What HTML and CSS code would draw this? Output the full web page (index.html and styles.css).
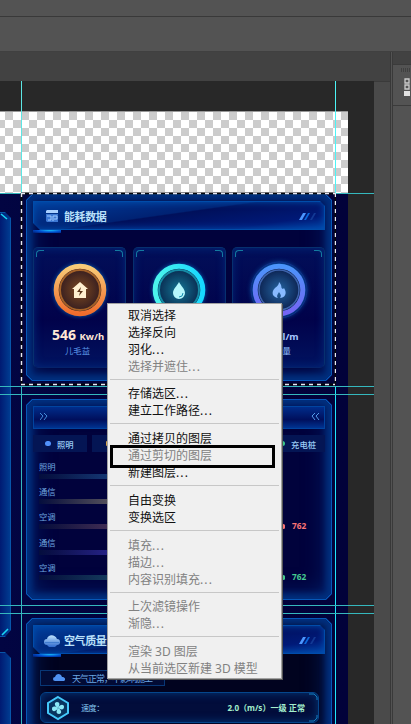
FILE: index.html
```html
<!DOCTYPE html>
<html lang="zh-CN">
<head>
<meta charset="utf-8">
<title>画布</title>
<link rel="stylesheet" href="styles.css">
</head>
<body>
<div class="app">
  <div class="menubar"></div>
  <div class="optionbar"></div>
  <div class="workspace">
    <div class="document">
      <div class="tabs"></div>
      <div class="stage">
        <div class="canvas">
          <div class="checker"></div>
          <div class="artwork">
            <div class="side">
              <div class="side-panel side-top"></div>
              <div class="side-panel side-bottom"></div>
              <svg class="side-ticks" width="12" height="531"><path d="M1 21l6 5M2 442l6-6" stroke="#18d4f4" stroke-width="1.6" fill="none"/></svg>
            </div>
            <div class="main">
              <section class="panel energy">
                <header class="title">
                  <svg class="title-icon" width="13" height="13" viewBox="0 0 13 13"><path d="M1 0h11v3H0V1z" fill="#a9d0ff"/><path d="M0 4h12v8H1l-1-1z" fill="#3c78d4"/><path d="M1 6h4v4H2M7 6v5M7 6h4v3H8" stroke="#9cc8ff" fill="none"/></svg>
                  <h2>能耗数据</h2>
                  <svg class="slashes" width="17" height="8" viewBox="0 0 17 8"><path d="M0 7L4 0h3L3 7z" fill="#4b96ff"/><path d="M5 7L9 0h2L7 7z" fill="#0b68dc"/><path d="M11 7l4-7h2l-4 7z" fill="#123995"/></svg>
                </header>
                <div class="glow"></div>
                <div class="cards">
                  <div class="card">
                    <svg class="ring" width="60" height="60" viewBox="0 0 60 60"><defs><linearGradient id="g1" x2="0" y2="1"><stop stop-color="#f8cc78"/><stop offset="1" stop-color="#f06c2c"/></linearGradient><radialGradient id="r1"><stop stop-color="#7d4a21"/><stop offset="1" stop-color="#2c1720"/></radialGradient></defs><circle cx="30" cy="30" r="23.8" fill="url(#r1)" stroke="url(#g1)" stroke-width="5"/><circle cx="30" cy="30" r="20" fill="none" stroke="#a56228" stroke-width="2"/><path d="M30 22l8 7h-2v9H24v-9h-2z" fill="#fff0d0"/><path d="M31 27l-4 5h3l-1 4 4-5h-3z" fill="#5a3519"/></svg>
                    <div class="value">546 <small>Kw/h</small></div>
                    <div class="label">儿毛益</div>
                  </div>
                  <div class="card">
                    <svg class="ring" width="60" height="60" viewBox="0 0 60 60"><defs><linearGradient id="g2"><stop stop-color="#4cf4ec"/><stop offset="1" stop-color="#16d8ff"/></linearGradient><radialGradient id="r2"><stop stop-color="#147795"/><stop offset="1" stop-color="#082047"/></radialGradient></defs><circle cx="30" cy="30" r="23.8" fill="url(#r2)" stroke="url(#g2)" stroke-width="5"/><circle cx="30" cy="30" r="20" fill="none" stroke="#158ba5" stroke-width="2"/><path d="M30 22c2 4 6 7 6 11a6 6 0 0 1-12 0c0-4 4-7 6-11z" fill="#b5f7fb"/><path d="M34 33q0 4-4 4" stroke="#168caf" fill="none"/></svg>
                  </div>
                  <div class="card">
                    <svg class="ring" width="60" height="60" viewBox="0 0 60 60"><defs><linearGradient id="g3" x2="0" y2="1"><stop stop-color="#4b94fa"/><stop offset="1" stop-color="#7564f4"/></linearGradient><radialGradient id="r3"><stop stop-color="#2464a0"/><stop offset="1" stop-color="#091a47"/></radialGradient></defs><circle cx="30" cy="30" r="28" fill="none" stroke="#10328a"/><circle cx="30" cy="30" r="23.8" fill="url(#r3)" stroke="url(#g3)" stroke-width="5"/><circle cx="30" cy="30" r="20" fill="none" stroke="#3e64ad" stroke-width="1.5"/><path d="M30 22c4 4 1 6 4 7l1-1c4 6 0 10-4 10 2-3 0-4-1-6-1 2-3 4-1 6-6-1-7-6-3-10 3-2 4-4 4-6z" fill="#88baff"/></svg>
                    <div class="value plain"><small>Jl/m</small></div>
                    <div class="label">用量</div>
                  </div>
                </div>
              </section>
              <section class="panel usage">
                <div class="strip"><svg width="9" height="7" viewBox="0 0 9 7"><path d="M0 0l3 3-3 4M4 0l3 3-3 4" stroke="#438bd8" fill="none"/></svg><svg width="9" height="7" viewBox="0 0 9 7"><path d="M4 0L1 3l3 4M8 0L5 3l3 4" stroke="#539be8" fill="none"/></svg></div>
                <div class="legend">
                  <span class="chip"><i class="dot blue"></i>照明</span>
                  <span class="chip"><i class="dot gold"></i></span>
                  <span class="chip last"><i class="dot green"></i>充电桩</span>
                </div>
                <div class="meter m1"><div class="meter-head"><span>照明</span></div><div class="bar"></div></div>
                <div class="meter m2"><div class="meter-head"><span>通信</span></div><div class="bar"></div></div>
                <div class="meter m3"><div class="meter-head"><span>空调</span></div><div class="bar"></div><b>762</b></div>
                <div class="meter m4"><div class="meter-head"><span>通信</span></div><div class="bar"></div></div>
                <div class="meter m5"><div class="meter-head"><span>空调</span></div><div class="bar"></div><b>762</b></div>
              </section>
              <section class="panel air">
                <header class="title">
                  <svg class="title-icon cloud" width="16" height="12" viewBox="0 0 16 12"><defs><linearGradient id="c" x2="0" y2="1"><stop stop-color="#bfe4ff"/><stop offset="1" stop-color="#2e68cc"/></linearGradient></defs><path d="M3 10a3 3 0 0 1 0-6C4-1 11-1 13 4a3 3 0 0 1 0 6l-2 2H5z" fill="url(#c)"/><path d="M1 7.500h14" stroke="#3070c8" stroke-width=".7"/></svg>
                  <h2>空气质量</h2>
                  <svg class="slashes" width="17" height="8" viewBox="0 0 17 8"><path d="M0 7L4 0h3L3 7z" fill="#4b96ff"/><path d="M5 7L9 0h2L7 7z" fill="#0b68dc"/><path d="M11 7l4-7h2l-4 7z" fill="#123995"/></svg>
                </header>
                <div class="glow"></div>
                <div class="notice"><svg width="12" height="8" viewBox="0 0 12 8"><path d="M2 7a2 2 0 0 1 0-4C3-1 8-1 9 3c4 0 4 4 1 4z" fill="#4f91f0"/></svg><span>天气正常，不影响施工</span></div>
                <div class="wind">
                  <svg width="26" height="26" viewBox="0 0 26 26"><path d="M13 2l10 6v10l-10 6-10-6V8z" fill="#08345f" stroke="#44c8fa" stroke-width="2"/><g fill="#8be9f7"><path id="b" d="M13 13C9 11 9 7 12 7s3 3 1 6z"/><use href="#b" transform="rotate(90 13 13)"/><use href="#b" transform="rotate(180 13 13)"/><use href="#b" transform="rotate(270 13 13)"/></g></svg>
                  <span class="speed">速度：</span><b>2.0（m/s）一级 正常</b>
                  <svg class="corner" width="9" height="29" viewBox="0 0 9 29"><path d="M0 1h5l3 3v3M0 28h5l3-3v-3" stroke="#147ebd" fill="none"/></svg>
                </div>
              </section>
            </div>
          </div>
        </div>
        <i class="guide v left-top"></i><i class="guide v left-low"></i>
        <i class="guide v right-top"></i><i class="guide v right-low"></i>
        <i class="guide h y1"></i><i class="guide h y2"></i><i class="guide h y3"></i><i class="guide h y4"></i><i class="guide h y5"></i>
        <svg class="selection" width="316" height="195"><path d="M1 2.500H315M1 193.500H315M1.500 2V194M315.500 2V194" stroke="#08080c" fill="none" stroke-width="2"/><path d="M1 2.500H315M1 193.500H315M1.500 2V194M315.500 2V194" stroke="#e8e8f4" fill="none" stroke-width="1.400" stroke-dasharray="4 4"/></svg>
      </div>
      <div class="scrollbar"></div>
    </div>
    <aside class="dock">
      <div class="dock-head"></div>
      <div class="dock-group"><i class="grip"></i><svg width="6" height="18" viewBox="0 0 6 18"><path d="M1 1h4v4H1zM1 7h4v4H1z" fill="#555" stroke="#ccc" stroke-width="1.300"/><path d="M0 13h6v5H0z" fill="#e2e2e2"/></svg></div>
    </aside>
  </div>
</div>

<div class="menu">
  <div class="item">取消选择</div>
  <div class="item">选择反向</div>
  <div class="item">羽化<span>...</span></div>
  <div class="item off">选择并遮住<span>...</span></div>
  <hr>
  <div class="item">存储选区<span>...</span></div>
  <div class="item">建立工作路径<span>...</span></div>
  <hr>
  <div class="item">通过拷贝的图层</div>
  <div class="item off">通过剪切的图层</div>
  <div class="item">新建图层<span>...</span></div>
  <hr>
  <div class="item">自由变换</div>
  <div class="item">变换选区</div>
  <hr>
  <div class="item off">填充<span>...</span></div>
  <div class="item off">描边<span>...</span></div>
  <div class="item off">内容识别填充<span>...</span></div>
  <hr>
  <div class="item off">上次滤镜操作</div>
  <div class="item off">渐隐<span>...</span></div>
  <hr>
  <div class="item off">渲染 3D 图层</div>
  <div class="item off">从当前选区新建 3D 模型</div>
  <i class="marker"></i>
</div>
</body>
</html>
```
FILE: styles.css
```css
* { box-sizing: border-box; }
body { margin: 0; overflow: hidden; font-family: "Noto Sans", "Noto Sans CJK SC", sans-serif; }
h2 { margin: 0; }
svg { display: block; flex: none; }

.app { width: 411px; height: 724px; display: flex; flex-direction: column; background: #535353; overflow: hidden; }
.menubar { height: 17px; flex: none; border-bottom: 1px solid #393939; }
.optionbar { height: 35px; flex: none; border-bottom: 1px solid #404040; }
.workspace { flex: 1; min-height: 0; display: flex; }

.document { width: 391px; display: grid; grid-template: 30px 1fr / 374px 16px; min-height: 0; border-right: 1px solid #383838; }
.tabs { grid-column: 1 / 3; background: #424242; border-bottom: 1px solid #3a3a3a; }
.stage { position: relative; background: #282828; overflow: hidden; margin-top: -1px; }
.scrollbar { background: #4a4a4a; }

.dock { flex: 1; margin-left: 1px; border-left: 1px solid #3a3a3a; }
.dock-head { height: 13px; background: #424242; border-bottom: 1px solid #3b3b3b; }
.dock-group { height: 41px; padding: 3px 0 0 11px; border-bottom: 1px solid #3b3b3b; }
.grip { display: block; width: 10px; height: 4px; margin: 0 0 6px -3px; background: repeating-linear-gradient(90deg, #404040 0 1px, #535353 1px 2px); }

/* Document */
.canvas { width: 348px; padding-top: 30px; }
.checker { height: 82px; background: repeating-conic-gradient(#ccc 0 25%, #fff 0 50%) -3px 0 / 16px 16px; border-top: 1px solid #999; }
.artwork { height: 531px; display: flex; background: linear-gradient(90deg, #020542 0, #01013b 50%, #02023a); overflow: hidden; }
.side { position: relative; width: 26px; flex: none; padding-top: 19px; }
.side-panel { width: 11px; background: linear-gradient(90deg, #001a72, #003c91); border: 1px solid #0755a9; border-left: 0; }
.side-top { height: 425px; clip-path: polygon(0 0, 5px 0, 100% 6px, 100% 418px, 5px 100%, 0 100%); }
.side-bottom { height: 90px; margin-top: 15px; clip-path: polygon(0 0, 5px 0, 100% 6px, 100% 100%, 0 100%); }
.side-ticks { position: absolute; left: 0; top: 0; }
.main { width: 306px; flex: none; display: flex; flex-direction: column; gap: 18px; padding-top: 1px; }

.panel { --cut: polygon(6px 0, calc(100% - 6px) 0, 100% 6px, 100% calc(100% - 6px), calc(100% - 6px) 100%, 6px 100%, 0 calc(100% - 6px), 0 6px); position: relative; isolation: isolate; flex: none; padding: 7px; background: #0657b8; clip-path: var(--cut); }
.panel::before { content: ""; position: absolute; inset: 1px; z-index: -1; clip-path: var(--cut); background: #01023c; box-shadow: inset 0 0 6px 5px #00307f, inset 0 0 24px 3px #002774; }
.energy { height: 187px; }
.usage { height: 201px; }
.air { height: 125px; }
.air::before { background: #01031f; }

.title { height: 29px; display: flex; align-items: center; padding: 2px 8px 0 12px; background: linear-gradient(172deg, #003e9b 0, #002273 45%, #00105b 47%, #001977 80%, #0043a5); border: 1px solid #004caa; box-shadow: inset 0 0 7px #0050b0; clip-path: polygon(0 0, calc(100% - 5px) 0, 100% 5px, 100% 100%, 7px 100%, 0 calc(100% - 7px)); }
.title-icon { margin-right: 5px; }
.title-icon.cloud { margin: 0 4px 0 -2px; }
.title h2 { font-size: 11px; line-height: 16px; font-weight: 700; color: #b9e0fa; letter-spacing: -.4px; }
.slashes { margin-left: auto; }
.glow { width: 28px; height: 3px; background: radial-gradient(ellipse at 60% 0, #1bc5ff, #0050d0 50%, #01186c); }

.cards { display: grid; grid-template-columns: repeat(3, 93px); justify-content: space-between; margin-top: 14px; }
.card { position: relative; height: 121px; padding-top: 13px; border: 1px solid #06306f; border-bottom-color: #05226a; border-radius: 5px; background: linear-gradient(#020f59, #01024a 60%, #011360); box-shadow: inset 0 0 8px #03297a; text-align: center; }
.card::before, .card::after { content: ""; position: absolute; top: 2px; width: 7px; height: 6px; border-top: 1px solid #137aa0; }
.card::before { left: 2px; border-left: 1px solid #137aa0; border-top-left-radius: 4px; }
.card::after { right: 2px; border-right: 1px solid #137aa0; border-top-right-radius: 4px; }
.ring { margin: -1px auto 0; filter: drop-shadow(0 0 2px #0860b0); }
.value { margin-top: 5px; font-size: 14px; line-height: 20px; font-weight: 700; color: #ffe7d5; white-space: nowrap; }
.card .value { margin-left: -3px; }
.value small { font-size: 9.500px; }
.value.plain { color: #a8c9ff; padding-left: 24px; }
.label { font-size: 8.300px; line-height: 10px; margin-top: -1px; color: #5c97e8; padding-right: 4px; }
.plain + .label { padding-left: 12px; color: #91bdf9; }

.strip { height: 23px; display: flex; justify-content: space-between; align-items: center; padding: 0 4px 3px 6px; background: linear-gradient(#002d8b, #000f5c 60%, #003391); border: 1px solid #0044a0; }
.legend { display: grid; grid-template-columns: 54px 54px 1fr; gap: 5px; margin-top: 6px; }
.chip { height: 17px; display: flex; align-items: center; gap: 6px; padding-left: 12px; font-size: 8.300px; font-weight: 500; color: #9acbf5; background: #041554; }
.chip.last { justify-content: flex-end; padding-right: 9px; }
.dot { width: 6px; height: 5px; border-radius: 3px; background: #5191fb; }
.dot.gold { background: #d5a44d; border-radius: 1px; margin-left: 2px; }
.dot.green { background: #3cc98c; }
.meter { --tone: #205797; position: relative; height: 25.200px; padding: 0 6px; font-size: 8.300px; line-height: 11px; color: #6fa7e0; }
.m1 { margin-top: 9px; }
.bar { width: 230px; height: 5px; margin-top: 2px; background: linear-gradient(90deg, #06103a, var(--tone) 35%, var(--tone)); opacity: .7; }
.meter > b { position: absolute; right: 0; top: 9px; width: 43px; padding-left: 10px; line-height: 12px; color: #fb7474; }
.meter > b::before { content: ""; position: absolute; left: 0; top: 4px; width: 3px; height: 5px; border-radius: 2px; background: currentColor; }
.m2 { --tone: #888070; }
.m3 { --tone: #684663; }
.m4 { --tone: #3d35b7; }
.m5 { --tone: #205b70; }
.m5 > b { color: #46cc91; }

.notice { width: 125px; height: 16px; margin: 13px 0 0 7px; padding-left: 12px; display: flex; align-items: center; gap: 7px; border: 1px solid #083776; background: #020b35; color: #6ba7e3; font-size: 9px; letter-spacing: -1px; white-space: nowrap; }
.wind { height: 31px; margin: 6px 6px 0 7px; display: flex; align-items: center; padding: 0 0 0 4px; border: 1px solid #05468c; border-radius: 6px; background: #020d3b; box-shadow: inset 0 0 10px #043879; color: #82e0c0; font-size: 8.100px; white-space: nowrap; }
.speed { margin-left: 10px; color: #85c8f2; letter-spacing: -.5px; }
.wind b { margin-left: auto; color: #a4efcd; }
.corner { margin-left: 4px; }

/* Guides and marquee selection */
.guide { position: absolute; background: #35b8be; }
.guide.v { width: 1px; }
.guide.h { height: 1px; left: 0; right: 0; }
.guide.left-top { left: 21px; top: 0; height: 112px; background: #5de6e4; }
.guide.left-low { left: 21px; top: 305px; bottom: 0; }
.guide.right-top { left: 335px; top: 0; height: 112px; background: #4cf4f6; }
.guide.right-low { left: 335px; top: 305px; bottom: 0; background: #20e5fa; }
.y1 { top: 112px; }
.y2 { top: 305px; }
.y3 { top: 313px; }
.y4 { top: 524px; }
.y5 { top: 532px; }
.selection { position: absolute; left: 20px; top: 110px; }

/* Context menu */
.menu { position: absolute; left: 107px; top: 303px; width: 175px; height: 376px; padding: 2.500px 2px; background: #f0f0f0; border: 1px solid #a2a2a2; box-shadow: 1px 1px 0 #555; font-size: 12px; color: #111; }
.item { height: 17px; line-height: 17px; padding-left: 18px; white-space: nowrap; }
.item span { letter-spacing: 1.100px; }
.item.off { color: #818181; }
.menu hr { height: 1px; margin: 4px 0 5.800px; border: 0; background: #c7c7c7; }
.marker { position: absolute; left: 2px; top: 141px; width: 165px; height: 23px; border: 3px solid #000; }
```
